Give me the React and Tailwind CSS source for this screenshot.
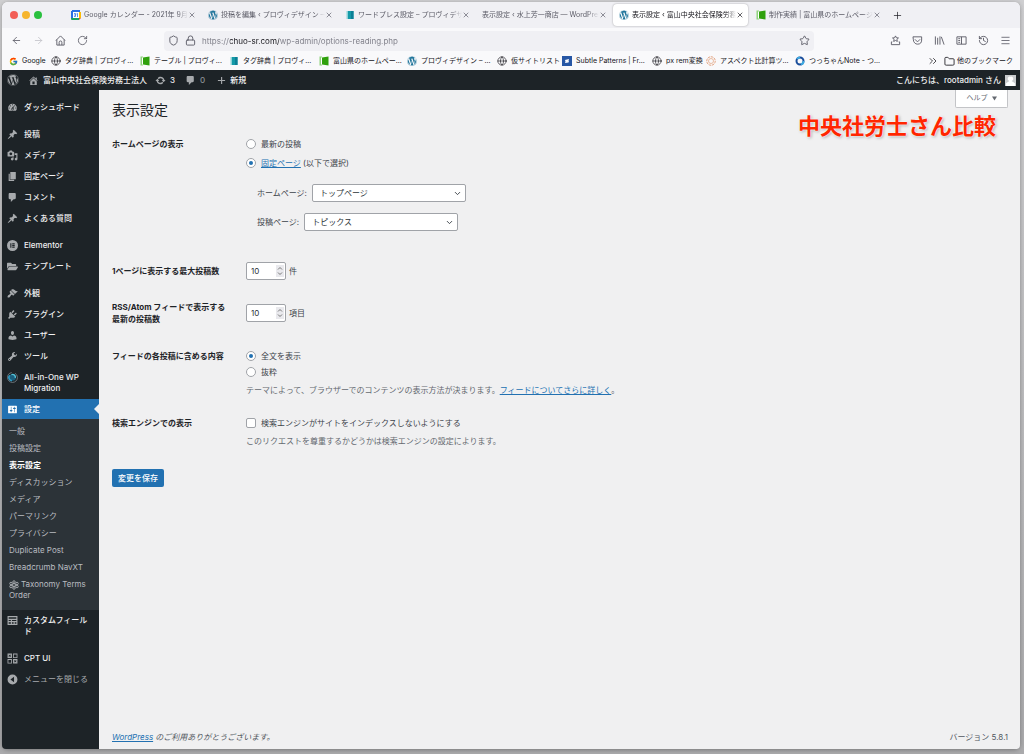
import React, { useState } from 'react';
import {
    ArrowLeft,
    ArrowRight,
    ChevronDown,
    ChevronsRight,
    Folder,
    Globe,
    History,
    Lock,
    Menu,
    Plus,
    RotateCw,
    Shield,
    Star,
    X
} from 'lucide-react';
import { FaFolderOpen, FaWordpress } from 'react-icons/fa';
import { FcGoogle } from 'react-icons/fc';

const paths = {
    dashboard: 'M3.76 16h12.48c1.1-1.37 1.76-3.11 1.76-5 0-4.42-3.58-8-8-8s-8 3.58-8 8c0 1.89.66 3.63 1.76 5zM10 4c.55 0 1 .45 1 1s-.45 1-1 1-1-.45-1-1 .45-1 1-1zM6 6c.55 0 1 .45 1 1s-.45 1-1 1-1-.45-1-1 .45-1 1-1zm8 0c.55 0 1 .45 1 1s-.45 1-1 1-1-.45-1-1 .45-1 1-1zm-5.37 5.55L12 7v6c0 1.1-.9 2-2 2s-2-.9-2-2c0-.57.24-1.08.63-1.45zM4 10c.55 0 1 .45 1 1s-.45 1-1 1-1-.45-1-1 .45-1 1-1zm12 0c.55 0 1 .45 1 1s-.45 1-1 1-1-.45-1-1 .45-1 1-1zm-5 3c0-.55-.45-1-1-1s-1 .45-1 1 .45 1 1 1 1-.45 1-1z',
    post: 'M10.44 3.02l1.82-1.82 6.36 6.35-1.83 1.82c-1.05-.68-2.48-.57-3.41.36l-.75.75c-.92.93-1.04 2.35-.35 3.41l-1.83 1.82-2.41-2.41-2.8 2.79c-.42.42-3.38 2.71-3.8 2.29s1.86-3.39 2.28-3.81l2.79-2.79L4.1 9.36l1.83-1.82c1.05.69 2.48.57 3.4-.36l.75-.75c.93-.92 1.05-2.35.36-3.41z',
    media: 'M13 11V4c0-.55-.45-1-1-1h-1.67L9 1H5L3.67 3H2c-.55 0-1 .45-1 1v7c0 .55.45 1 1 1h10c.55 0 1-.45 1-1zM7 4.5c1.38 0 2.5 1.12 2.5 2.5S8.38 9.5 7 9.5 4.5 8.38 4.5 7 5.62 4.5 7 4.5zM14 6h5v10.5c0 1.38-1.12 2.5-2.5 2.5S14 17.88 14 16.5s1.12-2.5 2.5-2.5c.17 0 .34.02.5.05V9h-3V6zm-4 8.05V13h2v3.5c0 1.38-1.12 2.5-2.5 2.5S7 17.88 7 16.5 8.12 14 9.5 14c.17 0 .34.02.5.05z',
    page: 'M6 15V2h10v13H6zm-1 1h8v2H3V5h2v11z',
    comment: 'M5 2h9c1.1 0 2 .9 2 2v7c0 1.1-.9 2-2 2h-2l-5 5v-5H5c-1.1 0-2-.9-2-2V4c0-1.1.9-2 2-2z',
    elementor: 'M10 0a10 10 0 1 0 0 20 10 10 0 0 0 0-20zM6 6h2v8H6zm3.500 0H14v2H9.500zm0 3H14v2H9.500zm0 3H14v2H9.500z',
    appearance: 'M14.48 11.06L7.41 3.99l1.5-1.5c.5-.56 2.3-.47 3.51.32 1.21.8 1.43 1.28 2.91 2.1 1.18.64 2.45 1.26 4.45.85zm-.71.71L6.7 4.7 4.93 6.47c-.39.39-.39 1.02 0 1.41l1.06 1.06c.39.39.39 1.03 0 1.42-.6.6-1.43 1.11-2.21 1.69-.35.26-.7.53-1.01.84C1.43 14.23.4 16.08 1.4 17.07c.99 1 2.84-.03 4.18-1.36.31-.31.58-.66.85-1.02.57-.78 1.08-1.61 1.69-2.21.39-.39 1.02-.39 1.41 0l1.06 1.06c.39.39 1.02.39 1.41 0z',
    plugins: 'M13.11 4.36L9.87 7.6 8 5.73l3.24-3.24c.35-.34 1.05-.2 1.56.32.52.51.66 1.21.31 1.55zm-8 1.77l.91-1.12 9.01 9.01-1.19.84c-.71.71-2.63 1.16-3.82 1.16H6.14L4.9 17.26c-.59.59-1.54.59-2.12 0-.59-.58-.59-1.53 0-2.12l1.24-1.24v-3.88c0-1.13.4-3.19 1.09-3.89zm7.26 3.97l3.24-3.24c.34-.35 1.04-.21 1.55.31.52.51.66 1.21.31 1.55l-3.24 3.25z',
    users: 'M10 9.25c-2.27 0-2.73-3.44-2.73-3.44C7 4.02 7.82 2 9.97 2c2.16 0 2.98 2.02 2.71 3.81 0 0-.41 3.44-2.68 3.44zm0 2.57L12.72 10c2.39 0 4.52 2.33 4.52 4.53v2.49s-3.65 1.13-7.24 1.13c-3.65 0-7.24-1.13-7.24-1.13v-2.49c0-2.25 1.94-4.48 4.47-4.48z',
    tools: 'M16.68 9.77c-1.34 1.34-3.3 1.67-4.95.99l-5.41 6.52c-.99.99-2.59.99-3.58 0s-.99-2.59 0-3.57l6.52-5.42c-.68-1.65-.35-3.61.99-4.95 1.28-1.28 3.12-1.62 4.72-1.06l-2.89 2.89 2.82 2.82 2.86-2.87c.53 1.58.18 3.39-1.08 4.65zM3.81 16.21c.4.39 1.04.39 1.43 0 .4-.4.4-1.04 0-1.43-.39-.4-1.03-.4-1.43 0-.39.39-.39 1.03 0 1.43z',
    settings: 'M18 16V4c0-.55-.45-1-1-1H3c-.55 0-1 .45-1 1v12c0 .55.45 1 1 1h14c.55 0 1-.45 1-1zM8 11h1c.55 0 1 .45 1 1s-.45 1-1 1H8v1.5c0 .28-.22.5-.5.5s-.5-.22-.5-.5V13H6c-.55 0-1-.45-1-1s.45-1 1-1h1V5.5c0-.28.22-.5.5-.5s.5.22.5.5V11zm5-2h-1c-.55 0-1-.45-1-1s.45-1 1-1h1V5.5c0-.28.22-.5.5-.5s.5.22.5.5V7h1c.55 0 1 .45 1 1s-.45 1-1 1h-1v5.5c0 .28-.22.5-.5.5s-.5-.22-.5-.5V9z',
    home: 'M16 8.5l1.53 1.53-1.06 1.06L10 4.6l-6.47 6.49-1.06-1.06L10 2.5l4 4v-2h2v4zm-6-2.46l6 5.99V18H4v-5.97zM12 17v-5H8v5h4z',
    update: 'M10.2 3.28c3.53 0 6.43 2.61 6.92 6h2.08l-3.5 4-3.5-4h2.32c-.45-1.97-2.21-3.45-4.32-3.45-1.45 0-2.73.71-3.54 1.78L4.95 5.66C6.23 4.2 8.11 3.28 10.2 3.28zm-.4 13.44c-3.52 0-6.43-2.61-6.92-6H.8l3.5-4c1.17 1.33 2.33 2.67 3.5 4H5.48c.45 1.97 2.21 3.45 4.32 3.45 1.45 0 2.73-.71 3.54-1.78l1.71 1.95c-1.28 1.46-3.15 2.38-5.25 2.38z',
    plus: 'M9 2h2.5v6.8H18v2.4h-6.5V18H9v-6.8H2V8.8h7z',
    collapse: 'M10 1a9 9 0 1 0 0 18 9 9 0 0 0 0-18zm2.8 13.8L6.2 10l6.6-4.8z',
    fields: 'M1 2h18v16H1zM3 4v3h14V4zm0 5v2h4V9zm6 0v2h8V9zm-6 4v3h4v-3zm6 0v3h3v-3zm5 0v3h3v-3z',
    cpt: 'M1 1h8v8H1zM3 3v1l1 1-1 1v1h1l1-1 1 1h1V6L6 5l1-1V3H6L5 4 4 3zM11 1h8v8h-8zM12.500 2.500v5h5v-5zM1 11h8v8H1zM2.500 12.500v5h5v-5zM11 11h8v8h-8zM13 13v1l1 1-1 1v1h1l1-1 1 1h1v-1l-1-1 1-1v-1h-1l-1 1-1-1z'
};

const Dash = ({ name, className = 'size-[11px]' }) => (
    <svg viewBox="0 0 20 20" fill="currentColor" fillRule="evenodd" className={`shrink-0 ${className}`}>
        <path d={paths[name]} />
    </svg>
);

const Migration = () => (
    <svg viewBox="0 0 20 20" fill="none" className="size-[11px] shrink-0">
        <circle cx="10" cy="10" r="9" stroke="#8f98a0" strokeWidth="1.200" strokeDasharray="40 6" />
        <circle cx="10" cy="10" r="6" fill="#1c5f7d" />
        <path d="M5 6a6 6 0 0 0 4 10" stroke="#2d9bc4" strokeWidth="3" />
        <path d="M8 5a5 5 0 0 1 7 6" stroke="#53c3d9" strokeWidth="2.500" />
    </svg>
);

const Flower = () => (
    <svg viewBox="0 0 20 20" fill="none" stroke="currentColor" strokeWidth="1.600" className="mr-[2px] inline size-[10px]">
        <circle cx="10" cy="10" r="3" />
        <circle cx="10" cy="4" r="2.500" />
        <circle cx="10" cy="16" r="2.500" />
        <circle cx="4" cy="7" r="2.500" />
        <circle cx="16" cy="7" r="2.500" />
        <circle cx="4" cy="13" r="2.500" />
        <circle cx="16" cy="13" r="2.500" />
    </svg>
);

const CalendarIcon = () => (
    <svg viewBox="0 0 20 20" className="size-[10px] shrink-0">
        <path fill="#2b6fe3" d="M2 0h16v4H2zM0 2h4v16H0z" />
        <path fill="#fbbc04" d="M16 4h4v12h-4z" />
        <path fill="#1ea362" d="M0 16h16v4H2a2 2 0 0 1-2-2z" />
        <path fill="#ea4335" d="M16 16h4l-4 4z" />
        <path fill="#fff" d="M4 4h12v12H4z" />
        <path fill="none" stroke="#2b6fe3" strokeWidth="1.500" d="M6 7h3v3H7h2v3H6M11 8l2-1v7" />
    </svg>
);

const Favicon = ({ type }) => {
    if (type === 'calendar') return <CalendarIcon />;
    if (type === 'wp') return <FaWordpress className="size-[10px] shrink-0 text-[#21759b]" />;
    if (type === 'teal')
        return (
            <svg viewBox="0 0 20 20" className="size-[10px] shrink-0">
                <path fill="#8fd3d8" d="M3 2h4v16H3z" />
                <path fill="#149aa8" d="M6 2h11v16H6z" />
                <path fill="#0c7f96" d="M12 2h5v16h-5z" />
            </svg>
        );
    if (type === 'green')
        return (
            <svg viewBox="0 0 20 20" className="size-[10px] shrink-0">
                <path fill="#8fd27c" d="M1 1h5v18H1z" />
                <path fill="#fff" d="M4 3h3v14H4z" />
                <path fill="#2fa00c" d="M6 3l13-2v18L6 17z" />
            </svg>
        );
    if (type === 'google') return <FcGoogle className="size-[9px] shrink-0" />;
    if (type === 'globe') return <Globe strokeWidth={1.5} className="size-[10px] shrink-0" />;
    if (type === 'subtle')
        return (
            <svg viewBox="0 0 20 20" className="size-[10px] shrink-0">
                <path fill="#2757a5" d="M0 0h20v20H0z" />
                <path fill="#fff" d="M6 8l8-2-1 4-6 1zM6 14l1-3 7-1-1 3z" />
            </svg>
        );
    if (type === 'ratio')
        return (
            <svg viewBox="0 0 20 20" fill="none" stroke="#e3a583" className="size-[10px] shrink-0">
                <circle cx="10" cy="10" r="8.500" strokeWidth="2" strokeDasharray="5 1.500" />
                <circle cx="10" cy="10" r="5" strokeWidth="1.500" />
            </svg>
        );
    if (type === 'ring')
        return (
            <svg viewBox="0 0 20 20" fill="none" strokeWidth="4" className="size-[10px] shrink-0">
                <circle cx="10" cy="10" r="7" stroke="#1b4f9c" />
                <path d="M4 6a7 7 0 0 1 6-3M17 10a7 7 0 0 1-5 7" stroke="#3fa9e0" />
            </svg>
        );
    return null;
};

const tabs = [
    { icon: 'calendar', title: 'Google カレンダー - 2021年 9月' },
    { icon: 'wp', title: '投稿を編集 ‹ プロヴィデザイン —' },
    { icon: 'teal', title: 'ワードプレス設定 – プロヴィデザ' },
    { title: '表示設定 ‹ 水上芳一商店 — WordPress' },
    { icon: 'wp', title: '表示設定 ‹ 富山中央社会保険労務', active: true },
    { icon: 'green', title: '制作実績 | 富山県のホームページ' }
];

const bookmarks = [
    { icon: 'google', title: 'Google', width: 'w-[42px]' },
    { icon: 'globe', title: 'タグ辞典 | プロヴィ...', width: 'w-[89px]' },
    { icon: 'green', title: 'テーブル | プロヴィ...', width: 'w-[89px]' },
    { icon: 'teal', title: 'タグ辞典 | プロヴィ...', width: 'w-[90px]' },
    { icon: 'green', title: '富山県のホームペー...', width: 'w-[88px]' },
    { icon: 'wp', title: 'プロヴィデザイン – ...', width: 'w-[90px]' },
    { icon: 'globe', title: '仮サイトリスト', width: 'w-[65px]' },
    { icon: 'subtle', title: 'Subtle Patterns | Fr...', width: 'w-[90px]' },
    { icon: 'globe', title: 'px rem変換', width: 'w-[54px]' },
    { icon: 'ratio', title: 'アスペクト比計算ツ...', width: 'w-[89px]' },
    { icon: 'ring', title: 'つっちゃんNote - つ...', width: 'w-[90px]' }
];

const menuGroups = [
    [{ icon: <Dash name="dashboard" />, label: 'ダッシュボード' }],
    [
        { icon: <Dash name="post" />, label: '投稿' },
        { icon: <Dash name="media" />, label: 'メディア' },
        { icon: <Dash name="page" />, label: '固定ページ' },
        { icon: <Dash name="comment" />, label: 'コメント' },
        { icon: <Dash name="post" />, label: 'よくある質問' }
    ],
    [
        { icon: <Dash name="elementor" />, label: 'Elementor' },
        { icon: <FaFolderOpen className="size-[11px] shrink-0" />, label: 'テンプレート' }
    ],
    [
        { icon: <Dash name="appearance" />, label: '外観' },
        { icon: <Dash name="plugins" />, label: 'プラグイン' },
        { icon: <Dash name="users" />, label: 'ユーザー' },
        { icon: <Dash name="tools" />, label: 'ツール' },
        { icon: <Migration />, label: 'All-in-One WP Migration' }
    ]
];

const submenu = [
    '一般',
    '投稿設定',
    '表示設定',
    'ディスカッション',
    'メディア',
    'パーマリンク',
    'プライバシー',
    'Duplicate Post',
    'Breadcrumb NavXT'
];

function Browser() {
    return (
        <header className="rounded-t-md bg-[#f9f9fb] text-[7px] leading-[10px] text-[#15141a]">
            {/* Tabs */}
            <div className="flex h-[26px] items-center rounded-t-md bg-[#f0f0f4] pl-2">
                <div className="flex w-[55px] shrink-0 gap-[4px]">
                    <span className="size-2 rounded-full bg-[#f25e57]" />
                    <span className="size-2 rounded-full bg-[#f6b52e]" />
                    <span className="size-2 rounded-full bg-[#2ac03f]" />
                </div>
                <div className="flex min-w-0">
                    {tabs.map((tab) => (
                        <div
                            key={tab.title}
                            className={`mr-[2px] flex h-[22px] w-[135px] items-center rounded-sm pr-[4px] pl-[6px] ${
                                tab.active ? 'bg-white shadow-[0_0_2px_rgba(0,0,0,0.35)]' : 'text-[#5b5b66]'
                            }`}
                        >
                            <Favicon type={tab.icon} />
                            <span
                                className={`min-w-0 flex-1 overflow-hidden whitespace-nowrap mask-r-from-90% ${
                                    tab.icon ? 'ml-[3px]' : ''
                                }`}
                            >
                                {tab.title}
                            </span>
                            <button type="button" aria-label="タブを閉じる">
                                <X strokeWidth={2} className="size-2" />
                            </button>
                        </div>
                    ))}
                </div>
                <button type="button" aria-label="新しいタブ" className="ml-[5px]">
                    <Plus strokeWidth={1.5} className="size-[11px]" />
                </button>
            </div>

            {/* Address bar */}
            <div className="flex h-[25px] items-center pr-[9px] pl-[9px] text-[#5b5b66]">
                <div className="flex w-[153px] shrink-0 items-center gap-[11px]">
                    <button type="button" aria-label="戻る">
                        <ArrowLeft strokeWidth={1.8} className="size-[11px]" />
                    </button>
                    <button type="button" aria-label="進む" className="text-[#c2c2c8]">
                        <ArrowRight strokeWidth={1.8} className="size-[11px]" />
                    </button>
                    <button type="button" aria-label="ホーム">
                        <svg viewBox="0 0 24 24" fill="none" stroke="currentColor" strokeWidth="2" strokeLinejoin="round" className="size-[11px]">
                            <path d="M2 12L12 2l10 10M4 10v12h16V10M9 22v-6a3 3 0 0 1 6 0v6" />
                        </svg>
                    </button>
                    <button type="button" aria-label="更新">
                        <RotateCw strokeWidth={1.8} className="size-[11px]" />
                    </button>
                </div>
                <div className="flex h-5 max-w-[650px] flex-1 items-center rounded-sm bg-[#f0f0f4] px-[4px]">
                    <Shield strokeWidth={2} className="mr-[6px] size-[11px] shrink-0" />
                    <Lock strokeWidth={2} className="mr-[6px] size-[11px] shrink-0" />
                    <input
                        type="text"
                        aria-label="アドレス"
                        defaultValue="https://chuo-sr.com/wp-admin/options-reading.php"
                        className="min-w-0 flex-1 bg-[linear-gradient(90deg,#7b7b85_28px,#15141a_28px,#15141a_77px,#7b7b85_77px)] bg-clip-text text-[8px] leading-3 text-transparent outline-none"
                    />
                    <Star strokeWidth={2} className="size-[11px] shrink-0" />
                </div>
                <div className="ml-auto flex items-center gap-[11px]">
                    <svg viewBox="0 0 24 24" fill="none" stroke="currentColor" strokeWidth="2" strokeLinejoin="round" className="size-[11px]">
                        <path d="M12 2l2 4 4.500.5-3.500 3 1 4.500-4-2-4 2 1-4.500-3.500-3L10 6zM5 15H3v6h18v-6h-2" />
                    </svg>
                    <svg viewBox="0 0 24 24" fill="none" stroke="currentColor" strokeWidth="2" strokeLinecap="round" className="size-[11px]">
                        <path d="M3 4h18v7a9 9 0 0 1-18 0zM7 10l5 5 5-5" />
                    </svg>
                    <svg viewBox="0 0 24 24" fill="none" stroke="currentColor" strokeWidth="2" className="size-[11px]">
                        <path d="M3 3v18M8 6v15M13 3v18M16 4l6 17" />
                    </svg>
                    <svg viewBox="0 0 24 24" fill="none" stroke="currentColor" strokeWidth="2" className="size-[11px]">
                        <path d="M2 4h20v16H2zM12 4v16M5 8h4M5 12h4M5 16h4" />
                    </svg>
                    <History strokeWidth={2} className="size-[11px]" />
                    <Menu strokeWidth={1.8} className="size-[11px]" />
                </div>
            </div>

            {/* Bookmarks */}
            <nav className="flex h-[17px] items-center pr-[7px] pb-px pl-[7px]">
                {bookmarks.map((item, i) => (
                    <a key={i} href="#" className={`flex shrink-0 items-center gap-1 whitespace-nowrap ${item.width}`}>
                        <Favicon type={item.icon} />
                        {item.title}
                    </a>
                ))}
                <span className="ml-auto flex items-center gap-[2px] whitespace-nowrap">
                    <ChevronsRight strokeWidth={1.5} className="mr-[3px] size-3" />
                    <Folder strokeWidth={1.8} className="size-[11px]" />
                    他のブックマーク
                </span>
            </nav>
        </header>
    );
}

function AdminBar() {
    return (
        <div className="flex h-5 items-center bg-[#1d2327] pr-1 pl-[5px] text-[8px] font-medium leading-3 text-[#f0f0f1]">
            <FaWordpress className="size-3 text-[#a7aaad]" />
            <Dash name="home" className="ml-[9px] size-[11px] text-[#a7aaad]" />
            <a href="#" className="ml-[4px]">富山中央社会保険労務士法人</a>
            <Dash name="update" className="ml-[8px] size-[11px] text-[#a7aaad]" />
            <span className="ml-[4px]">3</span>
            <Dash name="comment" className="ml-[10px] size-[11px] text-[#a7aaad]" />
            <span className="ml-[4px] text-[#8c8f94]">0</span>
            <Dash name="plus" className="ml-[12px] size-[9px] text-[#a7aaad]" />
            <a href="#" className="ml-[4px]">新規</a>
            <a href="#" className="ml-auto flex items-center gap-[4px]">
                こんにちは、rootadmin さん
                <svg viewBox="0 0 20 20" className="size-[11px]">
                    <path fill="#c9cbcd" d="M0 0h20v20H0z" />
                    <path fill="#fff" d="M10 3a4 4 0 0 1 2 8l6 4v5H2v-5l6-4a4 4 0 0 1 2-8z" />
                </svg>
            </a>
        </div>
    );
}

function MenuItem({ icon, label }) {
    return (
        <a href="#" className="flex items-start gap-[6px] py-[5px] pr-2 pl-[5px] text-[#a7aaad]">
            {icon}
            <span className="text-[#f0f0f1]">{label}</span>
        </a>
    );
}

function Sidebar() {
    return (
        <nav className="w-[97px] shrink-0 rounded-bl-sm bg-[#1d2327] pt-[7px] text-[8px] font-medium leading-[11px]">
            {menuGroups.map((group, i) => (
                <div key={i} className={i < menuGroups.length - 1 ? 'mb-[6px]' : ''}>
                    {group.map((item) => (
                        <MenuItem key={item.label} icon={item.icon} label={item.label} />
                    ))}
                </div>
            ))}

            <a href="#" className="relative flex h-5 items-center gap-[6px] bg-[#2271b1] pl-[5px] text-white">
                <Dash name="settings" />
                設定
                <span className="absolute top-1/2 right-0 -translate-y-1/2 border-[5px] border-transparent border-r-[#f0f0f1]" />
            </a>
            <div className="bg-[#2c3338] pt-1 pb-[6px] font-normal text-[#b9bcc0]">
                {submenu.map((label) => (
                    <a
                        key={label}
                        href="#"
                        className={`block px-[7px] py-[3px] ${label === '表示設定' ? 'font-bold text-white' : ''}`}
                    >
                        {label}
                    </a>
                ))}
                <a href="#" className="block px-[7px] py-[3px]">
                    <Flower />
                    Taxonomy Terms Order
                </a>
            </div>

            <MenuItem icon={<Dash name="fields" />} label="カスタムフィールド" />
            <div className="mt-[6px]">
                <MenuItem icon={<Dash name="cpt" />} label="CPT UI" />
                <button type="button" className="flex items-center gap-[6px] py-[5px] pl-[5px] font-normal text-[#a7aaad]">
                    <Dash name="collapse" />
                    メニューを閉じる
                </button>
            </div>
        </nav>
    );
}

const radioClass =
    "grid size-[10px] shrink-0 appearance-none place-content-center rounded-full border border-[#a0a3a8] bg-white before:size-1 before:rounded-full before:content-[''] checked:before:bg-[#2271b1]";

function PageSelect({ id, label, value }) {
    return (
        <div className="flex items-center gap-[5px]">
            <label htmlFor={id}>{label}:</label>
            <div className="relative">
                <select
                    id={id}
                    className="block h-[18px] w-[154px] appearance-none rounded-xs border border-[#a0a3a8] bg-white pr-5 pl-[7px] text-[#2c3338]"
                >
                    <option>{value}</option>
                </select>
                <ChevronDown strokeWidth={2.5} className="pointer-events-none absolute top-[5px] right-1 size-[9px]" />
            </div>
        </div>
    );
}

function CountInput({ id, unit }) {
    return (
        <div className="flex items-center gap-[3px]">
            <div className="relative">
                <input
                    id={id}
                    type="number"
                    defaultValue={10}
                    className="block h-[18px] w-10 appearance-none rounded-xs border border-[#a0a3a8] bg-white pl-1 text-[#2c3338] [appearance:textfield]"
                />
                <svg
                    viewBox="0 0 16 24"
                    fill="none"
                    stroke="#777"
                    strokeWidth="2"
                    className="pointer-events-none absolute top-[3px] right-[2px] h-3 w-2 bg-[#e9e9ed]"
                >
                    <path d="M4 9l4-4 4 4M4 15l4 4 4-4" />
                </svg>
            </div>
            <span>{unit}</span>
        </div>
    );
}

function SettingsForm() {
    const [front, setFront] = useState('page');
    const [feed, setFeed] = useState('full');
    const row = 'grid grid-cols-[134px_1fr]';
    const heading = 'font-bold text-[#1d2327]';
    const option = 'flex items-center gap-[5px]';
    const link = 'text-[#2271b1] underline';

    return (
        <form className="text-[8px] leading-3 text-[#3c434a]" onSubmit={(e) => e.preventDefault()}>
            <div className={`mt-[18px] ${row}`} role="group" aria-labelledby="front-heading">
                <div id="front-heading" className={heading}>ホームページの表示</div>
                <div>
                    <label className={option}>
                        <input type="radio" name="front" className={radioClass} checked={front === 'posts'} onChange={() => setFront('posts')} />
                        最新の投稿
                    </label>
                    <div className={`mt-[7px] ${option}`}>
                        <input id="front-page" type="radio" name="front" className={radioClass} checked={front === 'page'} onChange={() => setFront('page')} />
                        <label htmlFor="front-page">
                            <a href="#" className={link}>固定ページ</a> (以下で選択)
                        </label>
                    </div>
                    <div className="mt-[15px] ml-[11px] flex flex-col gap-[11px]">
                        <PageSelect id="home" label="ホームページ" value="トップページ" />
                        <PageSelect id="posts" label="投稿ページ" value="トピックス" />
                    </div>
                </div>
            </div>

            <div className={`mt-[31px] items-center ${row}`}>
                <label htmlFor="per-page" className={heading}>1ページに表示する最大投稿数</label>
                <CountInput id="per-page" unit="件" />
            </div>

            <div className={`mt-[21px] items-center ${row}`}>
                <label htmlFor="per-rss" className={heading}>
                    RSS/Atom フィードで表示する
                    <br />
                    最新の投稿数
                </label>
                <CountInput id="per-rss" unit="項目" />
            </div>

            <div className={`mt-[25px] ${row}`} role="group" aria-labelledby="feed-heading">
                <div id="feed-heading" className={heading}>フィードの各投稿に含める内容</div>
                <div>
                    <label className={option}>
                        <input type="radio" name="feed" className={radioClass} checked={feed === 'full'} onChange={() => setFeed('full')} />
                        全文を表示
                    </label>
                    <label className={`mt-[4px] ${option}`}>
                        <input type="radio" name="feed" className={radioClass} checked={feed === 'excerpt'} onChange={() => setFeed('excerpt')} />
                        抜粋
                    </label>
                    <p className="mt-[6px] text-[#646970]">
                        テーマによって、ブラウザーでのコンテンツの表示方法が決まります。
                        <a href="#" className={link}>フィードについてさらに詳しく</a>。
                    </p>
                </div>
            </div>

            <div className={`mt-[21px] ${row}`} role="group" aria-labelledby="search-heading">
                <div id="search-heading" className={heading}>検索エンジンでの表示</div>
                <div>
                    <label className={option}>
                        <input type="checkbox" className="size-[10px] shrink-0 appearance-none rounded-xs border border-[#a0a3a8] bg-white checked:bg-[#2271b1]" />
                        検索エンジンがサイトをインデックスしないようにする
                    </label>
                    <p className="mt-[6px] text-[#646970]">
                        このリクエストを尊重するかどうかは検索エンジンの設定によります。
                    </p>
                </div>
            </div>

            <button type="submit" className="mt-[22px] h-[18px] rounded-xs bg-[#2271b1] px-[6px] font-medium text-white">
                変更を保存
            </button>
        </form>
    );
}

export default function App() {
    return (
        <div
            lang="ja"
            className="flex min-h-screen flex-col bg-linear-to-b from-[#cfcfd1] to-[#aaaaac] pt-[2px] pr-[4px] pb-[5px] pl-[2px] font-['Inter','Noto_Sans_CJK_JP',sans-serif]"
        >
            <div className="flex flex-1 flex-col rounded-md shadow-[0_1px_4px_rgba(0,0,0,0.3)]">
                <Browser />
                <AdminBar />
                <div className="flex flex-1">
                    <Sidebar />
                    <main className="relative flex min-w-0 flex-1 flex-col rounded-br-sm bg-[#f0f0f1] pr-3 pl-[13px]">
                        <div className="flex h-[30px] items-start justify-between">
                            <h1 className="pt-[10px] text-[14px] leading-5 text-[#1d2327]">表示設定</h1>
                            <button
                                type="button"
                                className="flex h-[18px] w-[53px] items-center justify-center gap-[4px] rounded-b-xs border border-t-0 border-[#c3c4c7] bg-white text-[7px] text-[#646970]"
                            >
                                ヘルプ
                                <svg viewBox="0 0 10 10" fill="currentColor" className="size-[5px]">
                                    <path d="M0 1h10L5 9z" />
                                </svg>
                            </button>
                        </div>
                        <SettingsForm />
                        <footer className="mt-auto flex justify-between pb-[6px] text-[8px] leading-3 text-[#50575e]">
                            <p className="italic">
                                <a href="#" className="text-[#2271b1] underline">WordPress</a> のご利用ありがとうございます。
                            </p>
                            <p>バージョン 5.8.1</p>
                        </footer>
                        <p className="absolute top-[22px] right-6 text-[22px] leading-7 font-bold text-[#ff2600] [text-shadow:0_0_2px_#fff,0_0_2px_#fff,1px_1px_3px_#999]">
                            中央社労士さん比較
                        </p>
                    </main>
                </div>
            </div>
        </div>
    );
}
